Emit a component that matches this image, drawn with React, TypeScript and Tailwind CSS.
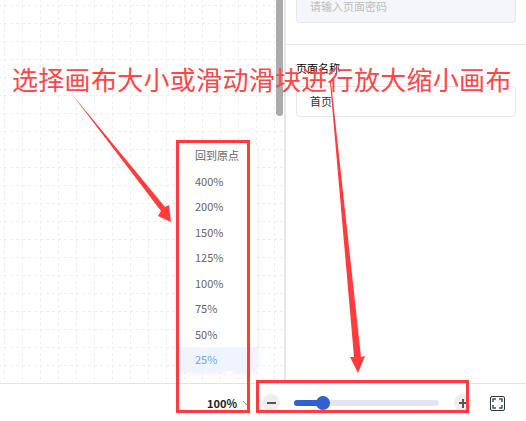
const MENU_ITEMS = ["回到原点", "400%", "200%", "150%", "125%", "100%", "75%", "50%", "25%"];

const CJK = "font-['Noto_Sans_CJK_SC','Noto_Sans',sans-serif]";

function CanvasGrid() {
  return (
    <svg className="absolute inset-0 h-full w-full" aria-hidden="true">
      <defs>
        <pattern id="grid" x="4" y="5" width="18" height="18" patternUnits="userSpaceOnUse">
          <path d="M0.5 0V18M0 0.5H18" stroke="#efefef" strokeWidth="1" strokeDasharray="3 3" fill="none" />
        </pattern>
      </defs>
      <rect width="100%" height="100%" fill="url(#grid)" />
    </svg>
  );
}

function Annotations() {
  return (
    <>
      <svg className="pointer-events-none absolute inset-0 h-[421px] w-[526px]" aria-hidden="true">
        <polygon fill="#ff3b3b" points="71,93 165,207 169,205 171,222 158,216 161,211" />
        <polygon fill="#ff3b3b" points="330,82 331,82 361,357 365,356 358,373 350,357 354,357" />
      </svg>
      <p className="pointer-events-none absolute left-[12px] top-[60px] whitespace-nowrap text-[26px] leading-[38px] tracking-[0.3px] text-[#ff4646]">
        选择画布大小或滑动滑块进行放大缩小画布
      </p>
      <div className="pointer-events-none absolute left-[176px] top-[140px] h-[273px] w-[74px] border-[3px] border-[#ff3b3b]" />
      <div className="pointer-events-none absolute left-[256px] top-[380px] h-[33px] w-[213px] border-[3px] border-[#ff3b3b]" />
    </>
  );
}

function ZoomMenu() {
  return (
    <ul className="absolute bottom-[11px] left-[178px] w-[79px] rounded-[4px] bg-white shadow-[0_0_8px_rgba(0,0,0,0.08)]">
      {MENU_ITEMS.map((item) => (
        <li
          key={item}
          className={
            item === "25%"
              ? "flex h-[25.5px] items-center bg-[#eef5ff] pl-[17px] text-[11px] text-[#6aa5ff]"
              : "flex h-[25.5px] items-center pl-[17px] text-[11px] text-[#666]"
          }
        >
          {item}
        </li>
      ))}
      <li className="absolute left-[46px] top-full h-0 w-0 -translate-y-[1px] border-x-[5px] border-t-[5px] border-x-transparent border-t-white" />
    </ul>
  );
}

function RoundButton({ children }: { children: React.ReactNode }) {
  return (
    <button className="flex h-[18px] w-[18px] items-center justify-center rounded-full bg-[#eeeeee] text-[#555]">
      {children}
    </button>
  );
}

export default function App() {
  return (
    <div className={`relative flex h-[421px] w-[526px] flex-col overflow-hidden bg-white ${CJK}`}>
      <div className="flex h-[384px] border-b border-[#e3e3e3]">
        <div className="relative flex w-[286px] justify-end border-r-2 border-[#e8e8e8]">
          <CanvasGrid />
          <div className="relative mr-[1px] h-[116px] w-[7px] rounded-b-[4px] bg-[#ababab]" />
          <ZoomMenu />
        </div>
        <div className="flex-1 px-[10px]">
          <div className="flex h-[23px] items-center rounded-b-[4px] border-x border-b border-[#e6e8ef] bg-[#f5f6fa] pb-[9px] pl-[13px] text-[11px] text-[#bdbdbd]">
            请输入页面密码
          </div>
          <div className="-mx-[10px] mt-[21px] border-t border-[#e8e8e8]" />
          <p className="mt-[16px] text-[11px] leading-[14px] text-black">页面名称</p>
          <div className="mt-[11px] flex h-[31px] items-center rounded-[4px] border border-[#e6e8ef] pl-[13px] text-[11px] text-[#333]">
            首页
          </div>
        </div>
      </div>
      <div className="flex flex-1 items-center pl-[207px] pt-[1px]">
        <span className="w-[30px] text-[11px] font-bold text-[#222]">100%</span>
        <svg className="ml-[5px] h-[8px] w-[9px]" viewBox="0 0 9 8" fill="none" stroke="#888" strokeWidth="1">
          <path d="M1 2l3.5 4L8 2" />
        </svg>
        <div className="ml-[11px]">
          <RoundButton>
            <span className="h-[1.5px] w-[9px] bg-[#555]" />
          </RoundButton>
        </div>
        <div className="relative ml-[14px] h-[6px] w-[145px] rounded-full bg-[#e2e6f0]">
          <div className="h-full w-[29px] rounded-full bg-[#2f62cf]" />
          <div className="absolute left-[22px] top-1/2 h-[14px] w-[14px] -translate-y-1/2 rounded-full bg-[#2f62cf]" />
        </div>
        <div className="ml-[15px]">
          <RoundButton>
            <span className="relative h-[1.5px] w-[9px] bg-[#555]">
              <span className="absolute left-[3.75px] top-[-3.75px] h-[9px] w-[1.5px] bg-[#555]" />
            </span>
          </RoundButton>
        </div>
        <svg className="ml-[18px] h-[15px] w-[15px]" viewBox="0 0 15 15" fill="none">
          <rect x="0.5" y="0.5" width="14" height="14" rx="1.5" stroke="#333" />
          <path d="M3 6V3h3M9 3h3v3M12 9v3H9M6 12H3V9" stroke="#3a5a6a" strokeWidth="1.5" />
        </svg>
      </div>
      <Annotations />
    </div>
  );
}
